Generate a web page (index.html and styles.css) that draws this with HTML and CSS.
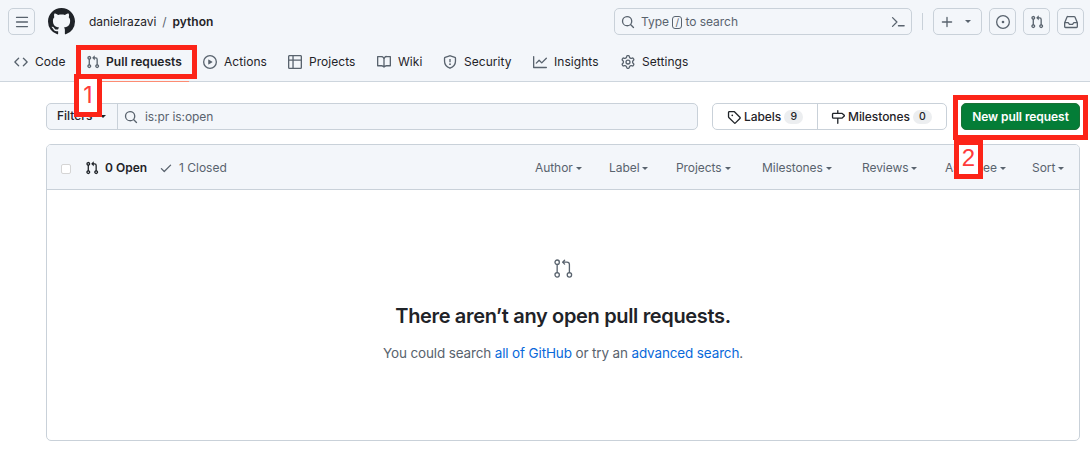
FILE: index.html
```html
<!DOCTYPE html>
<html lang="en">
<head>
<meta charset="utf-8">
<title>Pull requests · danielrazavi/python</title>
<link rel="stylesheet" href="styles.css">
</head>
<body>
<svg class="sprite" aria-hidden="true">
  <symbol id="pr" viewBox="0 0 16 16"><path d="M1.5 3.25a2.25 2.25 0 1 1 3 2.122v5.256a2.251 2.251 0 1 1-1.5 0V5.372A2.25 2.25 0 0 1 1.5 3.25Zm5.677-.177L9.573.677A.25.25 0 0 1 10 .854V2.5h1A2.5 2.5 0 0 1 13.5 5v5.628a2.251 2.251 0 1 1-1.5 0V5a1 1 0 0 0-1-1h-1v1.646a.25.25 0 0 1-.427.177L7.177 3.427a.25.25 0 0 1 0-.354ZM3.75 2.5a.75.75 0 1 0 0 1.5.75.75 0 0 0 0-1.5Zm0 9.5a.75.75 0 1 0 0 1.5.75.75 0 0 0 0-1.5Zm8.25.75a.75.75 0 1 0 1.5 0 .75.75 0 0 0-1.5 0Z"/></symbol>
  <symbol id="code" viewBox="0 0 16 16"><path d="m11.28 3.22 4.25 4.25a.75.75 0 0 1 0 1.06l-4.25 4.25a.749.749 0 0 1-1.275-.326.749.749 0 0 1 .215-.734L13.94 8l-3.72-3.72a.749.749 0 0 1 .326-1.275.749.749 0 0 1 .734.215Zm-6.56 0a.751.751 0 0 1 1.042.018.751.751 0 0 1 .018 1.042L2.06 8l3.72 3.72a.749.749 0 0 1-.326 1.275.749.749 0 0 1-.734-.215L.47 8.53a.75.75 0 0 1 0-1.06Z"/></symbol>
  <symbol id="play" viewBox="0 0 16 16"><path d="M8 0a8 8 0 1 1 0 16A8 8 0 0 1 8 0ZM1.5 8a6.5 6.5 0 1 0 13 0 6.5 6.5 0 0 0-13 0Zm4.879-2.773 4.264 2.559a.25.25 0 0 1 0 .428l-4.264 2.559A.25.25 0 0 1 6 10.559V5.442a.25.25 0 0 1 .379-.215Z"/></symbol>
  <symbol id="table" viewBox="0 0 16 16"><path d="M0 1.75C0 .784.784 0 1.75 0h12.5C15.216 0 16 .784 16 1.75v12.5A1.75 1.75 0 0 1 14.25 16H1.75A1.75 1.75 0 0 1 0 14.25ZM6.5 6.5v8h7.75a.25.25 0 0 0 .25-.25V6.5Zm8-1.5V1.75a.25.25 0 0 0-.25-.25H6.5V5Zm-13 1.5v7.75c0 .138.112.25.25.25H5v-8ZM5 5V1.5H1.75a.25.25 0 0 0-.25.25V5Z"/></symbol>
  <symbol id="book" viewBox="0 0 16 16"><path d="M0 1.75A.75.75 0 0 1 .75 1h4.253c1.227 0 2.317.59 3 1.501A3.743 3.743 0 0 1 11.006 1h4.245a.75.75 0 0 1 .75.75v10.5a.75.75 0 0 1-.75.75h-4.507a2.25 2.25 0 0 0-1.591.659l-.622.621a.75.75 0 0 1-1.06 0l-.622-.621A2.25 2.25 0 0 0 5.258 13H.75a.75.75 0 0 1-.75-.75Zm7.251 10.324.004-5.073-.002-2.253A2.25 2.25 0 0 0 5.003 2.5H1.5v9h3.757a3.75 3.75 0 0 1 1.994.574ZM8.755 4.75l-.004 7.322a3.752 3.752 0 0 1 1.992-.572H14.5v-9h-3.495a2.25 2.25 0 0 0-2.25 2.25Z"/></symbol>
  <symbol id="shield" viewBox="0 0 16 16"><path d="M7.6.95 2.4 2.65a.95.95 0 0 0-.65.95V7c0 3.7 2.3 6.4 6.25 8.1C11.950 13.400 14.250 10.700 14.250 7V3.600a.95.95 0 0 0-.65-.95L8.400.95a1.300 1.300 0 0 0-.8 0Z" fill="none" stroke="currentColor" stroke-width="1.500"/><path d="M7.250 4.500h1.500v3.750h-1.500ZM8 9.500a1 1 0 1 1 0 2 1 1 0 0 1 0-2Z"/></symbol>
  <symbol id="graph" viewBox="0 0 16 16"><path d="M1.5 1.75V13.5h13.75a.75.75 0 0 1 0 1.5H.75a.75.75 0 0 1-.75-.75V1.75a.75.75 0 0 1 1.5 0Zm14.28 2.53-5.25 5.25a.75.75 0 0 1-1.06 0L7 7.06 4.28 9.78a.751.751 0 0 1-1.042-.018.751.751 0 0 1-.018-1.042l3.25-3.25a.75.75 0 0 1 1.06 0L10 7.94l4.72-4.72a.751.751 0 0 1 1.042.018.751.751 0 0 1 .018 1.042Z"/></symbol>
  <symbol id="gear" viewBox="0 0 16 16"><path d="M8 0a8.2 8.2 0 0 1 .701.031C9.444.095 9.99.645 10.16 1.29l.288 1.107c.018.066.079.158.212.224.231.114.454.243.668.386.123.082.233.09.299.071l1.103-.303c.644-.176 1.392.021 1.82.63.27.385.506.792.704 1.218.315.675.111 1.422-.364 1.891l-.814.806c-.049.048-.098.147-.088.294.016.257.016.515 0 .772-.01.147.038.246.088.294l.814.806c.475.469.679 1.216.364 1.891a7.977 7.977 0 0 1-.704 1.217c-.428.61-1.176.807-1.82.63l-1.102-.302c-.067-.019-.177-.011-.3.071a5.909 5.909 0 0 1-.668.386c-.133.066-.194.158-.211.224l-.29 1.106c-.168.646-.715 1.196-1.458 1.26a8.006 8.006 0 0 1-1.402 0c-.743-.064-1.289-.614-1.458-1.26l-.289-1.106c-.018-.066-.079-.158-.212-.224a5.738 5.738 0 0 1-.668-.386c-.123-.082-.233-.09-.299-.071l-1.103.303c-.644.176-1.392-.021-1.82-.63a8.12 8.12 0 0 1-.704-1.218c-.315-.675-.111-1.422.363-1.891l.815-.806c.05-.048.098-.147.088-.294a6.214 6.214 0 0 1 0-.772c.01-.147-.038-.246-.088-.294l-.815-.806C.635 6.045.431 5.298.746 4.623a7.92 7.92 0 0 1 .704-1.217c.428-.61 1.176-.807 1.82-.63l1.102.302c.067.019.177.011.3-.071.214-.143.437-.272.668-.386.133-.066.194-.158.211-.224l.29-1.106C6.009.645 6.556.095 7.299.03 7.53.01 7.764 0 8 0Zm-.571 1.525c-.036.003-.108.036-.137.146l-.289 1.105c-.147.561-.549.967-.998 1.189-.173.086-.34.183-.5.29-.417.278-.97.423-1.529.27l-1.103-.303c-.109-.03-.175.016-.195.045-.22.312-.412.644-.573.99-.014.031-.021.11.059.19l.815.806c.411.406.562.957.53 1.456a4.709 4.709 0 0 0 0 .582c.032.499-.119 1.05-.53 1.456l-.815.806c-.081.08-.073.159-.059.19.162.346.353.677.573.989.02.03.085.076.195.046l1.102-.303c.56-.153 1.113-.008 1.53.27.161.107.328.204.501.29.447.222.85.629.997 1.189l.289 1.105c.029.109.101.143.137.146a6.6 6.6 0 0 0 1.142 0c.036-.003.108-.036.137-.146l.289-1.105c.147-.561.549-.967.998-1.189.173-.086.34-.183.5-.29.417-.278.97-.423 1.529-.27l1.103.303c.109.029.175-.016.195-.045.22-.313.411-.644.573-.99.014-.031.021-.11-.059-.19l-.815-.806c-.411-.406-.562-.957-.53-1.456a4.709 4.709 0 0 0 0-.582c-.032-.499.119-1.05.53-1.456l.815-.806c.081-.08.073-.159.059-.19a6.464 6.464 0 0 0-.573-.989c-.02-.03-.085-.076-.195-.046l-1.102.303c-.56.153-1.113.008-1.53-.27a4.44 4.44 0 0 0-.501-.29c-.447-.222-.85-.629-.997-1.189l-.289-1.105c-.029-.11-.101-.143-.137-.146a6.6 6.6 0 0 0-1.142 0ZM11 8a3 3 0 1 1-6 0 3 3 0 0 1 6 0ZM9.5 8a1.5 1.5 0 1 0-3.001.001A1.5 1.5 0 0 0 9.5 8Z"/></symbol>
  <symbol id="mark" viewBox="0 0 16 16"><path d="M8 0c4.42 0 8 3.58 8 8a8.013 8.013 0 0 1-5.45 7.59c-.4.08-.55-.17-.55-.38 0-.27.01-1.13.01-2.2 0-.75-.25-1.23-.54-1.48 1.78-.2 3.65-.88 3.65-3.95 0-.88-.31-1.59-.82-2.15.08-.2.36-1.02-.08-2.12 0 0-.67-.22-2.2.82-.64-.18-1.32-.27-2-.27-.68 0-1.36.09-2 .27-1.53-1.03-2.2-.82-2.2-.82-.44 1.1-.16 1.92-.08 2.12-.51.56-.82 1.28-.82 2.15 0 3.06 1.86 3.75 3.64 3.95-.23.2-.44.55-.51 1.07-.46.21-1.61.55-2.33-.66-.15-.24-.6-.83-1.23-.82-.67.01-.27.38.01.53.34.19.73.9.82 1.13.16.45.68 1.31 2.69.94 0 .67.01 1.3.01 1.49 0 .21-.15.45-.55.38A7.995 7.995 0 0 1 0 8c0-4.42 3.58-8 8-8Z"/></symbol>
  <symbol id="search" viewBox="0 0 16 16"><path d="M10.68 11.74a6 6 0 0 1-7.922-8.982 6 6 0 0 1 8.982 7.922l3.04 3.04a.749.749 0 0 1-.326 1.275.749.749 0 0 1-.734-.215ZM11.5 7a4.499 4.499 0 1 0-8.997 0A4.499 4.499 0 0 0 11.5 7Z"/></symbol>
  <symbol id="inbox" viewBox="0 0 16 16"><path d="M2.8 2.06A1.75 1.75 0 0 1 4.41 1h7.18c.7 0 1.333.417 1.61 1.06l2.74 6.395c.04.093.06.194.06.295v4.5A1.75 1.75 0 0 1 14.25 15H1.75A1.75 1.75 0 0 1 0 13.25v-4.5c0-.101.02-.202.06-.295Zm1.61.44a.25.25 0 0 0-.23.152L1.887 8H4.75a.75.75 0 0 1 .6.3L6.625 10h2.75l1.275-1.7a.75.75 0 0 1 .6-.3h2.863L11.82 2.652a.25.25 0 0 0-.23-.152Zm10.09 7h-2.875l-1.275 1.7a.75.75 0 0 1-.6.3h-3.5a.75.75 0 0 1-.6-.3L4.375 9.5H1.5v3.75c0 .138.112.25.25.25h12.5a.25.25 0 0 0 .25-.25Z"/></symbol>
  <symbol id="tag" viewBox="0 0 16 16"><path d="M1 7.775V2.75C1 1.784 1.784 1 2.75 1h5.025c.464 0 .91.184 1.238.513l6.25 6.25a1.75 1.75 0 0 1 0 2.474l-5.026 5.026a1.75 1.75 0 0 1-2.474 0l-6.25-6.25A1.752 1.752 0 0 1 1 7.775Zm1.5 0c0 .066.026.13.073.177l6.25 6.25a.25.25 0 0 0 .354 0l5.025-5.025a.25.25 0 0 0 0-.354l-6.25-6.25a.25.25 0 0 0-.177-.073H2.75a.25.25 0 0 0-.25.25ZM6 5a1 1 0 1 1 0 2 1 1 0 0 1 0-2Z"/></symbol>
  <symbol id="milestone" viewBox="0 0 16 16"><path d="M7.75 0a.75.75 0 0 1 .75.75V3h3.634c.414 0 .814.147 1.13.414l2.07 1.75a1.75 1.75 0 0 1 0 2.672l-2.07 1.75a1.75 1.75 0 0 1-1.13.414H8.5v5.25a.75.75 0 0 1-1.5 0V10H2.75A1.75 1.75 0 0 1 1 8.25v-3.5C1 3.784 1.784 3 2.75 3H7V.75A.75.75 0 0 1 7.75 0Zm4.384 8.5a.25.25 0 0 0 .161-.06l2.07-1.75a.248.248 0 0 0 0-.38l-2.07-1.75a.25.25 0 0 0-.161-.06H2.75a.25.25 0 0 0-.25.25v3.5c0 .138.112.25.25.25h9.384Z"/></symbol>
  <symbol id="issue" viewBox="0 0 16 16"><circle cx="8" cy="8" r="7.250" fill="none" stroke="currentColor" stroke-width="1.500"/><circle cx="8" cy="8" r="1.500"/></symbol>
  <symbol id="menu" viewBox="0 0 16 16"><path d="M1.750 2.750h12.500M1.750 8h12.500M1.750 13.250h12.500" fill="none" stroke="currentColor" stroke-width="1.500" stroke-linecap="round"/></symbol>
  <symbol id="terminal" viewBox="0 0 16 16"><path d="m1.750 3 5 5-5 5M8.500 12.250h6.500" fill="none" stroke="currentColor" stroke-width="1.500" stroke-linecap="round" stroke-linejoin="round"/></symbol>
  <symbol id="plus" viewBox="0 0 16 16"><path d="M8 2.750v10.500M2.750 8h10.500" fill="none" stroke="currentColor" stroke-width="1.500" stroke-linecap="round"/></symbol>
  <symbol id="check" viewBox="0 0 16 16"><path d="m2.750 8.750 3.250 3.250 7.250-7.250" fill="none" stroke="currentColor" stroke-width="1.500" stroke-linecap="round" stroke-linejoin="round"/></symbol>
  <symbol id="pr-large" viewBox="0 0 24 24"><g fill="none" stroke="currentColor" stroke-width="1.500" stroke-linecap="round" stroke-linejoin="round"><circle cx="4.750" cy="4.750" r="2.500"/><circle cx="4.750" cy="19.250" r="2.500"/><circle cx="18.750" cy="19.250" r="2.500"/><path d="M4.750 7.250v9.500M18.750 16.750V7.500A2.750 2.750 0 0 0 16 4.750H11M13.250 2.500 11 4.750l2.250 2.250"/></g></symbol>
</svg>

<header class="header">
  <div class="topbar">
    <button class="square"><svg class="icon"><use href="#menu"/></svg></button>
    <svg class="logo"><use href="#mark"/></svg>
    <nav class="crumbs"><span class="owner">danielrazavi</span><span class="slash">/</span><b class="repo">python</b></nav>
    <div class="search">
      <svg class="icon"><use href="#search"/></svg>
      <span class="search-text">Type <kbd>/</kbd> to search</span>
      <svg class="icon"><use href="#terminal"/></svg>
    </div>
    <span class="divider"></span>
    <button class="square create"><svg class="icon"><use href="#plus"/></svg><i class="caret"></i></button>
    <button class="square"><svg class="icon"><use href="#issue"/></svg></button>
    <button class="square"><svg class="icon"><use href="#pr"/></svg></button>
    <button class="square"><svg class="icon"><use href="#inbox"/></svg></button>
  </div>
  <nav class="tabs">
    <a class="tab"><svg class="icon"><use href="#code"/></svg><span>Code</span></a>
    <a class="tab active"><svg class="icon"><use href="#pr"/></svg><span>Pull requests</span></a>
    <a class="tab"><svg class="icon"><use href="#play"/></svg><span>Actions</span></a>
    <a class="tab"><svg class="icon"><use href="#table"/></svg><span>Projects</span></a>
    <a class="tab"><svg class="icon"><use href="#book"/></svg><span>Wiki</span></a>
    <a class="tab"><svg class="icon"><use href="#shield"/></svg><span>Security</span></a>
    <a class="tab"><svg class="icon"><use href="#graph"/></svg><span>Insights</span></a>
    <a class="tab"><svg class="icon"><use href="#gear"/></svg><span>Settings</span></a>
  </nav>
</header>

<main class="main">
  <div class="toolbar">
    <div class="filter">
      <button class="filter-button">Filters<i class="caret"></i></button>
      <div class="query"><svg class="icon"><use href="#search"/></svg><span>is:pr is:open</span></div>
    </div>
    <div class="links">
      <a class="link labels"><svg class="icon"><use href="#tag"/></svg><span>Labels</span><span class="count">9</span></a>
      <a class="link"><svg class="icon"><use href="#milestone"/></svg><span>Milestones</span><span class="count">0</span></a>
    </div>
    <button class="primary">New pull request</button>
  </div>

  <section class="list">
    <div class="list-header">
      <span class="checkbox"></span>
      <a class="state open"><svg class="icon"><use href="#pr"/></svg><span>0 Open</span></a>
      <a class="state"><svg class="icon"><use href="#check"/></svg><span>1 Closed</span></a>
      <div class="menus">
        <span>Author<i class="caret"></i></span>
        <span>Label<i class="caret"></i></span>
        <span>Projects<i class="caret"></i></span>
        <span>Milestones<i class="caret"></i></span>
        <span>Reviews<i class="caret"></i></span>
        <span>Assignee<i class="caret"></i></span>
        <span>Sort<i class="caret"></i></span>
      </div>
    </div>
    <div class="blank">
      <svg class="blank-icon"><use href="#pr-large"/></svg>
      <h1>There aren’t any open pull requests.</h1>
      <p>You could search <a>all of GitHub</a> or try an <a>advanced search</a>.</p>
    </div>
  </section>
</main>

<div class="mark tab-mark"></div>
<div class="mark step step-one">1</div>
<div class="mark button-mark"></div>
<div class="mark step step-two">2</div>
</body>
</html>
```

FILE: styles.css
```css
* { box-sizing: border-box; }

body {
  margin: 0;
  width: 1090px;
  height: 449px;
  overflow: hidden;
  position: relative;
  background: #fff;
  color: #1f2328;
  font: 12px/18px Inter, "Liberation Sans", sans-serif;
}

button { font: inherit; color: inherit; margin: 0; }

.sprite { position: absolute; width: 0; height: 0; }

.icon { width: 14px; height: 14px; flex: none; fill: currentColor; color: #59636e; }

.caret {
  display: inline-block;
  flex: none;
  border: 3px solid transparent;
  border-top-color: currentColor;
  border-bottom: 0;
}

/* Header */
.header { height: 82px; background: #f3f6fa; border-bottom: 1px solid #cdd5dd; }

.topbar { display: flex; align-items: center; height: 43px; padding: 0 6px 0 8px; }

.square {
  display: flex;
  align-items: center;
  justify-content: center;
  flex: none;
  width: 27px;
  height: 27px;
  padding: 0;
  background: transparent;
  border: 1px solid #c9d1d9;
  border-radius: 5px;
}
.square + .square { margin-left: 7px; }

.create { width: 49px; gap: 11px; padding-right: 4px; color: #59636e; }

.logo { width: 27px; height: 27px; margin: 0 14px 0 13px; fill: #1f2328; }

.crumbs { display: flex; width: 525px; }
.owner { letter-spacing: -0.07px; }
.slash { margin: 0 6px; color: #59636e; }
.repo { font-weight: 600; }

.search {
  display: flex;
  align-items: center;
  width: 298px;
  height: 27px;
  padding: 0 6px;
  border: 1px solid #c9d1d9;
  border-radius: 5px;
  color: #59636e;
}
.search-text { flex: 1; margin-left: 6px; letter-spacing: -0.05px; }
kbd {
  display: inline-block;
  width: 10px;
  height: 13px;
  border: 1px solid #59636e;
  border-radius: 3px;
  font: 10px/11px Inter, sans-serif;
  text-align: center;
}

.divider { width: 1px; height: 17px; margin: 0 10px; background: #c9d1d9; }

.tabs {
  display: grid;
  grid-template-columns: 72px 117px 85px 89px 66px 90px 88px 80px;
  height: 39px;
  padding-left: 14px;
}
.tab { display: flex; align-items: center; gap: 7px; padding-bottom: 1px; letter-spacing: 0.05px; }
.active {
  gap: 6px;
  width: 109px;
  margin-left: -6px;
  padding-left: 6px;
  font-weight: 600;
  box-shadow: inset 0 -1px #fd8c73;
}

/* Toolbar */
.main { padding: 21px 10px 0 46px; }

.toolbar { display: flex; height: 27px; }

.filter {
  display: flex;
  width: 652px;
  margin-right: 14px;
  border: 1px solid #c9d1d9;
  border-radius: 5px;
  background: #f3f6fa;
}
.filter-button {
  display: flex;
  align-items: center;
  gap: 8px;
  width: 71px;
  padding: 0 0 1px 10px;
  border: 0;
  border-right: 1px solid #c9d1d9;
  background: transparent;
  font-weight: 500;
}
.query { display: flex; align-items: center; gap: 7px; padding-left: 6px; color: #59636e; letter-spacing: -0.08px; }

.links { display: flex; width: 235px; border: 1px solid #c9d1d9; border-radius: 5px; }
.link { display: flex; align-items: center; padding-left: 13px; font-weight: 500; letter-spacing: -0.05px; }
.link .icon { color: #1f2328; margin-right: 3px; }
.labels { width: 105px; padding-left: 14px; border-right: 1px solid #c9d1d9; }
.count {
  height: 14px;
  min-width: 19px;
  margin-left: 3px;
  border-radius: 7px;
  background: #eceef0;
  font-size: 10.500px;
  line-height: 14px;
  text-align: center;
}

.primary {
  width: 119px;
  margin-left: 14px;
  padding: 0;
  border: 1px solid #1a7135;
  border-radius: 5px;
  background: #047d37;
  color: #fff;
  font-weight: 600;
  letter-spacing: -0.06px;
  white-space: nowrap;
}

/* List */
.list {
  height: 297px;
  margin-top: 14px;
  border: 1px solid #c9d1d9;
  border-radius: 5px;
  overflow: hidden;
}
.list-header {
  display: flex;
  align-items: center;
  height: 45px;
  padding: 2px 0 0 14px;
  background: #f3f6fa;
  border-bottom: 1px solid #c9d1d9;
  color: #59636e;
}
.checkbox {
  width: 10px;
  height: 10px;
  margin: 2px 14px 0 0;
  border: 1px solid #d5d5d5;
  border-radius: 2px;
  background: #fff;
}
.state { display: flex; align-items: center; gap: 6px; width: 74px; }
.open, .open .icon { color: #1f2328; }
.open { font-weight: 600; }
.menus {
  display: grid;
  grid-template-columns: 74px 67px 86px 100px 83px 87px 40px;
  margin-left: auto;
  margin-right: 7px;
  letter-spacing: -0.06px;
}
.menus span { display: flex; align-items: center; gap: 3px; }

.blank { display: flex; flex-direction: column; align-items: center; padding-top: 68px; }
.blank-icon { width: 21px; height: 21px; color: #59636e; }
h1 { margin: 24px 0 0; font-size: 20px; line-height: 27px; font-weight: 600; letter-spacing: -0.34px; }
p { margin: 13px 0 0; font-size: 13.500px; line-height: 20px; letter-spacing: -0.14px; color: #59636e; }
p a { color: #0969da; }

/* Tutorial callouts lie over the page */
.mark { position: absolute; border: 5px solid #fc2418; }
.tab-mark { left: 76px; top: 45px; width: 121px; height: 34px; }
.button-mark { left: 953px; top: 95px; width: 135px; height: 45px; }
.step {
  background: #fff;
  color: #ff3b3b;
  font: 24px/33px "Liberation Sans", sans-serif;
  text-align: center;
}
.step-one { left: 74px; top: 74px; width: 28px; height: 43px; font-family: Inter, sans-serif; font-size: 23px; }
.step-two { left: 954px; top: 140px; width: 29px; height: 39px; line-height: 26px; }
```
